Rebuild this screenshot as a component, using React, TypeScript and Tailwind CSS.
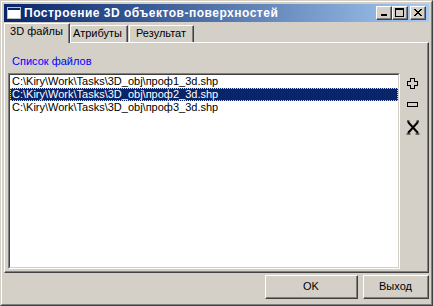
import React from "react";

function CapBtn({ children }: { children: React.ReactNode }) {
  return (
    <div className="w-[16px] h-[14px] bg-[#d4d0c8] border border-t-white border-l-white border-r-[#404040] border-b-[#404040]">
      <div className="w-full h-full border-r border-b border-[#808080] flex items-center justify-center">
        {children}
      </div>
    </div>
  );
}

function Raised({ children, className }: { children: React.ReactNode; className: string }) {
  return (
    <div className={"bg-[#d4d0c8] border border-t-white border-l-white border-r-[#404040] border-b-[#404040] " + className}>
      <div className="w-full h-full border-r border-b border-[#808080] flex items-center justify-center">
        {children}
      </div>
    </div>
  );
}

const rows = [
  "C:\\Kiry\\Work\\Tasks\\3D_obj\\проф1_3d.shp",
  "C:\\Kiry\\Work\\Tasks\\3D_obj\\проф2_3d.shp",
  "C:\\Kiry\\Work\\Tasks\\3D_obj\\проф3_3d.shp",
];

export default function App() {
  return (
    <div className="w-[433px] h-[306px] bg-[#d4d0c8] font-['Liberation_Sans',Arial,sans-serif] text-[11px] text-black leading-[13px]">
      <div className="w-full h-full border border-t-[#d4d0c8] border-l-[#d4d0c8] border-r-[#404040] border-b-[#404040]">
        <div className="w-full h-full border border-t-white border-l-white border-r-[#808080] border-b-[#808080] p-[2px] flex flex-col">
          {/* Title bar */}
          <div className="h-[18px] flex items-center bg-linear-to-r from-[#0a246a] to-[#a6caf0] pl-[2px] pr-[3px]">
            <svg width="16" height="16" viewBox="0 0 16 16" shapeRendering="crispEdges" className="shrink-0">
              <rect x="1.5" y="2.5" width="13" height="11" fill="#ffffff" stroke="#c0c0c0" />
              <rect x="2" y="3" width="12" height="2" fill="#0a246a" />
            </svg>
            <div className="ml-[2px] text-white font-bold text-[12px] tracking-[0.5px] leading-[14px] whitespace-nowrap">
              Построение 3D объектов-поверхностей
            </div>
            <div className="ml-auto flex items-center">
              <CapBtn>
                <svg width="8" height="7" viewBox="0 0 8 7" shapeRendering="crispEdges">
                  <rect x="1" y="5" width="6" height="2" fill="#000" />
                </svg>
              </CapBtn>
              <CapBtn>
                <svg width="9" height="9" viewBox="0 0 9 9" shapeRendering="crispEdges">
                  <rect x="0" y="0" width="9" height="2" fill="#000" />
                  <rect x="0" y="0" width="1" height="9" fill="#000" />
                  <rect x="8" y="0" width="1" height="9" fill="#000" />
                  <rect x="0" y="8" width="9" height="1" fill="#000" />
                </svg>
              </CapBtn>
              <div className="ml-[2px]">
                <CapBtn>
                  <svg width="8" height="7" viewBox="0 0 8 7" shapeRendering="crispEdges">
                    <path d="M0 0h2v1h-2zM6 0h2v1h-2zM1 1h2v1h-2zM5 1h2v1h-2zM2 2h4v1h-4zM3 3h2v1h-2zM2 4h4v1h-4zM1 5h2v1h-2zM5 5h2v1h-2zM0 6h2v1h-2zM6 6h2v1h-2z" fill="#000" />
                  </svg>
                </CapBtn>
              </div>
            </div>
          </div>

          {/* Tabs */}
          <div className="mt-[1px] h-[19px] flex items-end">
            <div className="relative z-10 -mb-px h-[20px] w-[66px] bg-[#d4d0c8] border-t border-l border-r border-t-white border-l-white border-r-[#404040]">
              <div className="h-full border-r border-[#808080] flex justify-center pt-[1px]">3D файлы</div>
            </div>
            <div className="h-[17px] w-[58px] border-t border-l border-r border-t-white border-l-white border-r-[#404040]">
              <div className="h-full border-r border-[#808080] flex justify-center pt-[1px] pr-[2px]">Атрибуты</div>
            </div>
            <div className="ml-px h-[17px] w-[65px] border-t border-l border-r border-t-white border-l-white border-r-[#404040]">
              <div className="h-full border-r border-[#808080] flex justify-center pt-[1px]">Результат</div>
            </div>
          </div>

          {/* Panel */}
          <div className="h-[231px] border border-t-white border-l-white border-r-[#404040] border-b-[#404040]">
            <div className="h-full border-r border-b border-[#808080] flex flex-col">
              <div className="mt-[12px] pl-[7px] h-[13px] text-[#0000ff]">Список файлов</div>
              <div className="mt-[5px] flex">
                <div className="ml-[3px] w-[392px] h-[196px] border border-t-[#808080] border-l-[#808080] border-r-white border-b-white">
                  <div className="w-full h-full bg-white border border-t-[#404040] border-l-[#404040] border-r-[#d4d0c8] border-b-[#d4d0c8] flex flex-col">
                    {rows.map((r, i) => (
                      <div
                        key={i}
                        className={
                          i === 1
                            ? "h-[13px] pl-[2px] bg-[#0a246a] text-white whitespace-nowrap outline-1 outline-dotted outline-[#e8d890] -outline-offset-1"
                            : "h-[13px] pl-[2px] whitespace-nowrap"
                        }
                      >
                        {r}
                      </div>
                    ))}
                  </div>
                </div>
                <div className="w-[25px] pt-[5px] flex flex-col items-center">
                  <svg width="11" height="11" viewBox="0 0 11 11" shapeRendering="crispEdges">
                    <path d="M3.5 0.5h4v3h3v4h-3v3h-4v-3h-3v-4h3z" fill="#d4d0c8" stroke="#000" />
                  </svg>
                  <svg className="mt-[13px]" width="11" height="5" viewBox="0 0 11 5" shapeRendering="crispEdges">
                    <rect x="0.5" y="0.5" width="10" height="4" fill="#d4d0c8" stroke="#000" />
                  </svg>
                  <svg className="mt-[13px]" width="14" height="15" viewBox="0 0 14 15">
                    <path d="M2 2L12 13M12 2L2 13" stroke="#000" strokeWidth="2" />
                    <path d="M0.5 14h4M9.5 14h4M1 1.2h2.5M10.5 1.2h2.5" stroke="#000" strokeWidth="1.2" />
                  </svg>
                </div>
              </div>
            </div>
          </div>

          {/* Buttons */}
          <div className="mt-[2px] flex justify-end gap-[5px]">
            <Raised className="w-[93px] h-[24px]">OK</Raised>
            <Raised className="w-[66px] h-[24px]">Выход</Raised>
          </div>
        </div>
      </div>
    </div>
  );
}
